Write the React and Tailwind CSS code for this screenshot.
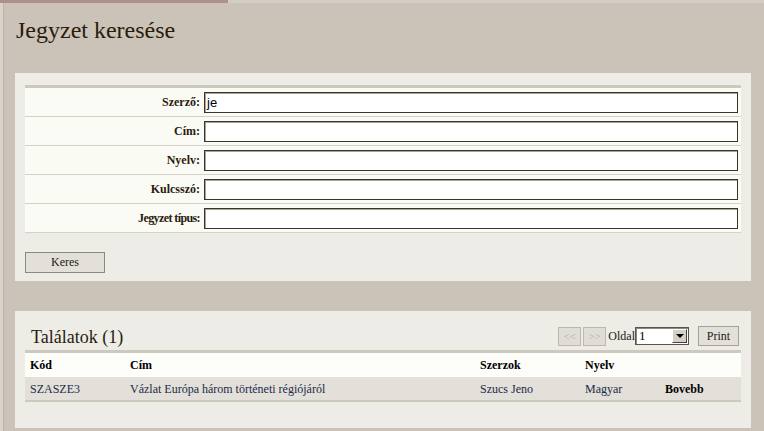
import React from "react";

const labels = ["Szerző:", "Cím:", "Nyelv:", "Kulcsszó:", "Jegyzet típus:"];

export default function App() {
  return (
    <div className="w-[764px] h-[431px] overflow-hidden bg-[#cbc3b7] flex flex-col [font-family:'Liberation_Serif','Times_New_Roman',serif] text-[#2a1c0c]">
      <div className="flex h-[3px] shrink-0">
        <div className="w-[228px] bg-[#b09088]" />
        <div className="flex-1 bg-[#d3cdc4]" />
      </div>
      <div className="flex flex-1 min-h-0">
        <div className="w-[4px] bg-[#d9d3cb] border-r border-[#bdb5a9]" />
        <div className="flex-1 flex flex-col pl-[11px] pr-[13px]">
          <div className="h-[70px] pt-[13px] text-[24px] leading-[28px] pl-[1px]">Jegyzet keresése</div>
          <div className="h-[208px] bg-[#edece7] px-[10px] pt-[12px] flex flex-col">
            <div className="border-t-[3px] border-[#cfc8bd]">
              {labels.map((l, i) => (
                <div key={l} className="grid grid-cols-[179px_1fr] h-[29px] bg-[#fbfbf6] border-b border-[#d4d1c9] items-center">
                  <div className={"text-right pr-[4px] font-bold text-[12px] " + (i === 4 ? "tracking-[-0.6px]" : "")}>{l}</div>
                  <div className="pr-[3px]">
                    <div className="h-[21px] bg-white border border-[#3b342c] shadow-[inset_1px_1px_0_#a8a39b] pl-[2px] text-[13px] leading-[19px] [font-family:'Liberation_Sans',Arial,sans-serif] text-black">
                      {i === 0 ? "je" : ""}
                    </div>
                  </div>
                </div>
              ))}
            </div>
            <div className="mt-[19px] w-[80px] h-[21px] bg-[#e3e0da] border border-[#8e877d] text-center text-[12px] leading-[19px] text-[#1f1a14]">
              Keres
            </div>
          </div>
          <div className="h-[30px]" />
          <div className="h-[117px] bg-[#edece7] px-[10px] pt-[14px] flex flex-col">
            <div className="flex items-center h-[22px] mb-[3px]">
              <div className="pl-[6px] text-[18px] leading-[22px] text-[#2a1c0c] pt-[2px]">Találatok (1)</div>
              <div className="ml-auto flex items-center text-[12px]">
                <div className="w-[23px] h-[19px] bg-[#e0ddd7] border border-[#bdb7ad] text-[#b4aea4] text-[11px] leading-[17px] text-center">&lt;&lt;</div>
                <div className="ml-[2px] w-[23px] h-[19px] bg-[#e0ddd7] border border-[#bdb7ad] text-[#b4aea4] text-[11px] leading-[17px] text-center">&gt;&gt;</div>
                <div className="ml-[2px] text-[12px] text-[#1f1a14]">Oldal</div>
                <div className="w-[54px] h-[18px] bg-white border border-[#5a544c] shadow-[inset_1px_1px_0_#8d877f] flex items-center">
                  <span className="pl-[3px] text-[13px] leading-[16px] flex-1 text-black">1</span>
                  <div className="w-[15px] h-[14px] mr-[1px] bg-[#d4d0c8] border border-t-white border-l-white border-r-[#404040] border-b-[#404040] flex items-center justify-center">
                    <div className="w-0 h-0 border-l-[4px] border-r-[4px] border-t-[4px] border-l-transparent border-r-transparent border-t-black" />
                  </div>
                </div>
                <div className="ml-[9px] mr-[2px] w-[41px] h-[20px] bg-[#e3e0da] border border-[#a7a096] text-center text-[12px] leading-[18px] text-[#1f1a14]">Print</div>
              </div>
            </div>
            <div className="border-t-[3px] border-b-[2px] border-[#cfc8bd] text-[12px]">
              <div className="grid grid-cols-[100px_350px_105px_80px_1fr] pl-[5px] h-[24px] items-center bg-[#fdfdf9] font-bold text-black">
                <div>Kód</div>
                <div>Cím</div>
                <div>Szerzok</div>
                <div>Nyelv</div>
                <div></div>
              </div>
              <div className="grid grid-cols-[100px_350px_105px_80px_1fr] pl-[5px] h-[23px] items-center bg-[#e3e0d9] text-[#1b2a4a]">
                <div>SZASZE3</div>
                <div>Vázlat Európa három történeti régiójáról</div>
                <div>Szucs Jeno</div>
                <div>Magyar</div>
                <div className="font-bold text-black">Bovebb</div>
              </div>
            </div>
          </div>
        </div>
      </div>
    </div>
  );
}
